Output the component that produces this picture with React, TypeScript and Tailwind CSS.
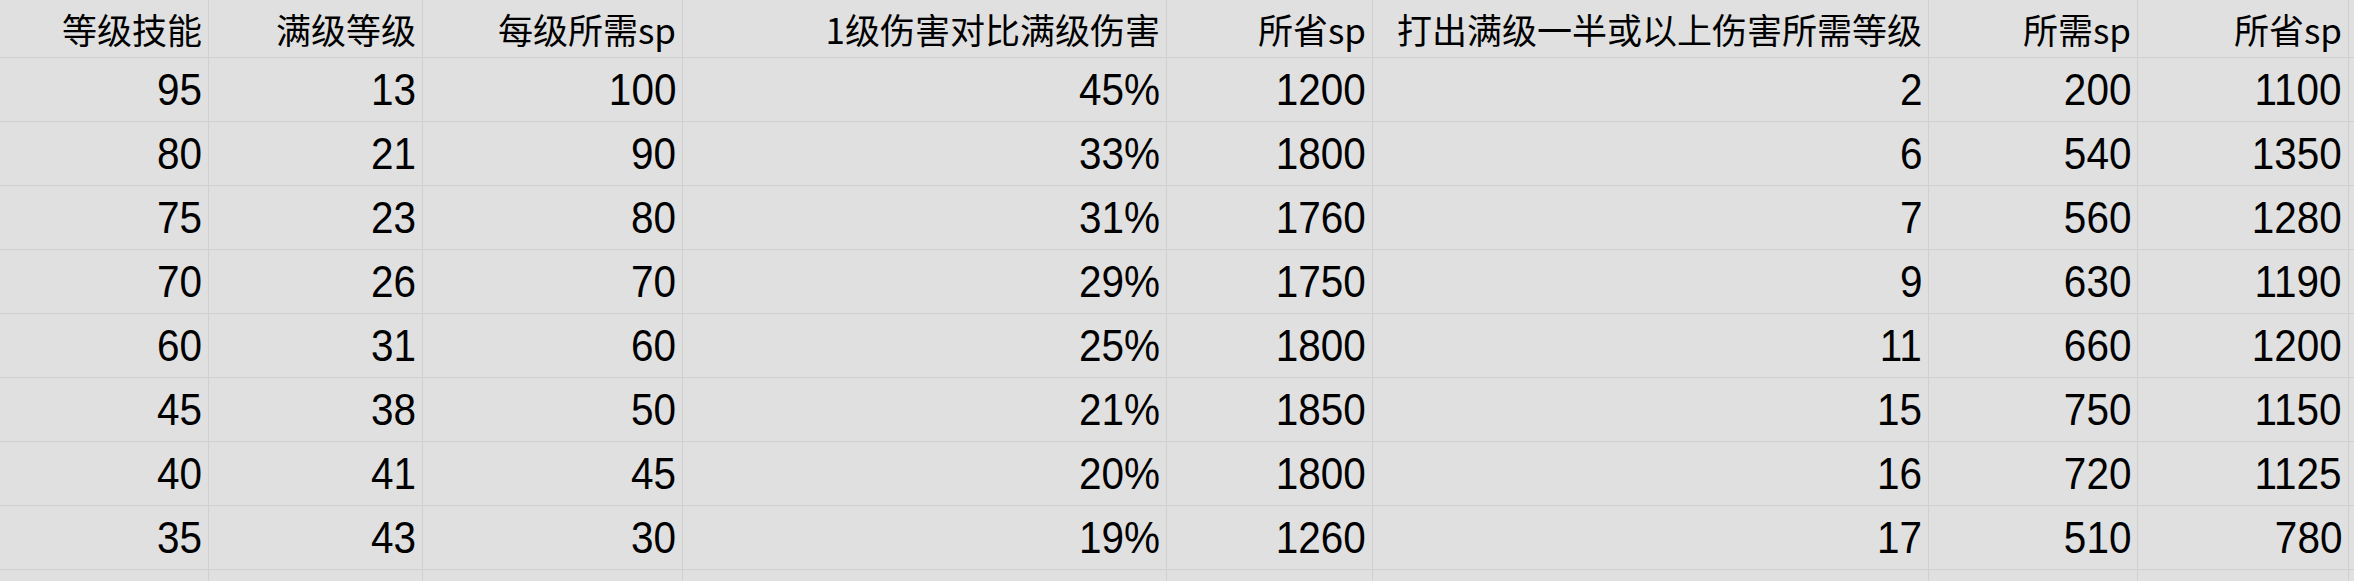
import React from 'react'

interface Row {
  level: number
  maxLevel: number
  spPerLevel: number
  ratio: string
  saved: number
  halfLevel: number
  needSp: number
  savedSp: number
}

const rows: Row[] = [
  { level: 95, maxLevel: 13, spPerLevel: 100, ratio: '45%', saved: 1200, halfLevel: 2, needSp: 200, savedSp: 1100 },
  { level: 80, maxLevel: 21, spPerLevel: 90, ratio: '33%', saved: 1800, halfLevel: 6, needSp: 540, savedSp: 1350 },
  { level: 75, maxLevel: 23, spPerLevel: 80, ratio: '31%', saved: 1760, halfLevel: 7, needSp: 560, savedSp: 1280 },
  { level: 70, maxLevel: 26, spPerLevel: 70, ratio: '29%', saved: 1750, halfLevel: 9, needSp: 630, savedSp: 1190 },
  { level: 60, maxLevel: 31, spPerLevel: 60, ratio: '25%', saved: 1800, halfLevel: 11, needSp: 660, savedSp: 1200 },
  { level: 45, maxLevel: 38, spPerLevel: 50, ratio: '21%', saved: 1850, halfLevel: 15, needSp: 750, savedSp: 1150 },
  { level: 40, maxLevel: 41, spPerLevel: 45, ratio: '20%', saved: 1800, halfLevel: 16, needSp: 720, savedSp: 1125 },
  { level: 35, maxLevel: 43, spPerLevel: 30, ratio: '19%', saved: 1260, halfLevel: 17, needSp: 510, savedSp: 780 },
]

const headers = [
  '等级技能',
  '满级等级',
  '每级所需sp',
  '1级伤害对比满级伤害',
  '所省sp',
  '打出满级一半或以上伤害所需等级',
  '所需sp',
  '所省sp',
]

const cellBase = 'flex items-center justify-end pr-[6px] border-r border-b border-[#d0d0d0] overflow-hidden whitespace-nowrap'

function HeaderCell({ text }: { text: string }) {
  return (
    <div className={`${cellBase} h-[58px]`}>
      <span className="text-[35px] leading-none text-black font-['Noto_Sans_CJK_SC',sans-serif]">{text}</span>
    </div>
  )
}

function NumCell({ value }: { value: string | number }) {
  return (
    <div className={`${cellBase} h-[64px]`}>
      <span className="inline-block origin-right scale-x-[0.92] text-[44px] leading-none text-black font-['Liberation_Sans',sans-serif]">
        {value}
      </span>
    </div>
  )
}

export default function App() {
  return (
    <div className="w-[2354px] h-[581px] overflow-hidden bg-[#e0e0e0]">
      <div className="grid grid-cols-[209px_214px_260px_484px_206px_556px_209px_211px_1fr]">
        {headers.map((h, i) => (
          <HeaderCell key={i} text={h} />
        ))}
        <div className={`${cellBase} h-[58px]`} />

        {rows.map((r, i) => (
          <React.Fragment key={i}>
            <NumCell value={r.level} />
            <NumCell value={r.maxLevel} />
            <NumCell value={r.spPerLevel} />
            <NumCell value={r.ratio} />
            <NumCell value={r.saved} />
            <NumCell value={r.halfLevel} />
            <NumCell value={r.needSp} />
            <NumCell value={r.savedSp} />
            <div className={`${cellBase} h-[64px]`} />
          </React.Fragment>
        ))}

        {Array.from({ length: 9 }).map((_, i) => (
          <div key={i} className={`${cellBase} h-[64px]`} />
        ))}
      </div>
    </div>
  )
}
